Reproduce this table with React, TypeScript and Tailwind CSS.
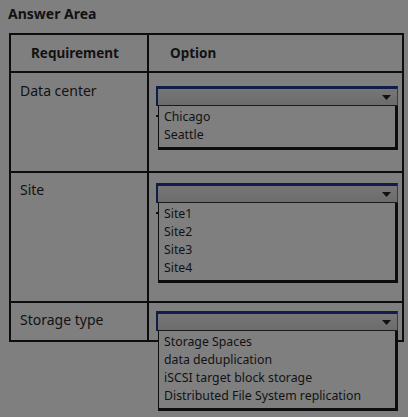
const font = { fontFamily: '"Noto Sans", "Open Sans", Arial, sans-serif' };

function Dropdown({ items }: { items: string[] }) {
  return (
    <div className="relative w-[242px]">
      {/* closed select box */}
      <div className="h-[20px] border-t-[3px] border-l-2 border-b border-r border-t-[#0f1d4a] border-l-[#0f1d4a] border-b-[#1a1a1a] border-r-[#3a3a3a] bg-gradient-to-b from-[#767676] to-[#6c6c6c] flex items-center justify-end pr-[6px]">
        <svg width="9" height="5" viewBox="0 0 9 5">
          <path d="M0 0 L9 0 L4.5 5 Z" fill="#111" />
        </svg>
      </div>
      {/* open list */}
      <div className="absolute left-[2px] top-[20px] w-[240px] bg-[#7f7f7f] border-l border-r-[3px] border-b-[3px] border-[#0d0d0d] pt-[2px] pb-[3px] pl-[5px]">
        <span className="absolute left-[-3px] top-[9px] w-[2px] h-[2px] bg-[#111]" />
        {items.map((item) => (
          <div key={item} className="h-[18px] leading-[18px] text-[12.3px] text-[#121212]">
            {item}
          </div>
        ))}
      </div>
    </div>
  );
}

export default function App() {
  return (
    <div className="w-[408px] h-[417px] bg-[#7f7f7f] overflow-hidden text-[#121212]" style={font}>
      <div className="pl-[8px] pt-[4px] h-[33px] text-[14px] font-bold leading-[20px]">Answer Area</div>

      <div className="ml-[9px] w-[395px] border-2 border-[#0d0d0d]">
        {/* Header */}
        <div className="flex h-[38px] border-b-2 border-[#0d0d0d]">
          <div className="w-[138px] border-r-2 border-[#0d0d0d] flex items-center pl-[20px] font-bold text-[13.5px]">
            Requirement
          </div>
          <div className="flex-1 flex items-center pl-[21px] font-bold text-[13.5px]">Option</div>
        </div>

        {/* Data center */}
        <div className="flex h-[100px] border-b-2 border-[#0d0d0d]">
          <div className="w-[138px] border-r-2 border-[#0d0d0d] pl-[9px] pt-[8px] text-[14px] leading-[20px]">
            Data center
          </div>
          <div className="flex-1 pl-[7px] pt-[13px]">
            <Dropdown items={['Chicago', 'Seattle']} />
          </div>
        </div>

        {/* Site */}
        <div className="flex h-[130px] border-b-2 border-[#0d0d0d]">
          <div className="w-[138px] border-r-2 border-[#0d0d0d] pl-[9px] pt-[7px] text-[14px] leading-[20px]">
            Site
          </div>
          <div className="flex-1 pl-[7px] pt-[10px]">
            <Dropdown items={['Site1', 'Site2', 'Site3', 'Site4']} />
          </div>
        </div>

        {/* Storage type */}
        <div className="flex h-[37px]">
          <div className="w-[138px] border-r-2 border-[#0d0d0d] pl-[9px] pt-[7px] text-[14px] leading-[20px]">
            Storage type
          </div>
          <div className="flex-1 pl-[7px] pt-[8px]">
            <Dropdown
              items={[
                'Storage Spaces',
                'data deduplication',
                'iSCSI target block storage',
                'Distributed File System replication',
              ]}
            />
          </div>
        </div>
      </div>
    </div>
  );
}
